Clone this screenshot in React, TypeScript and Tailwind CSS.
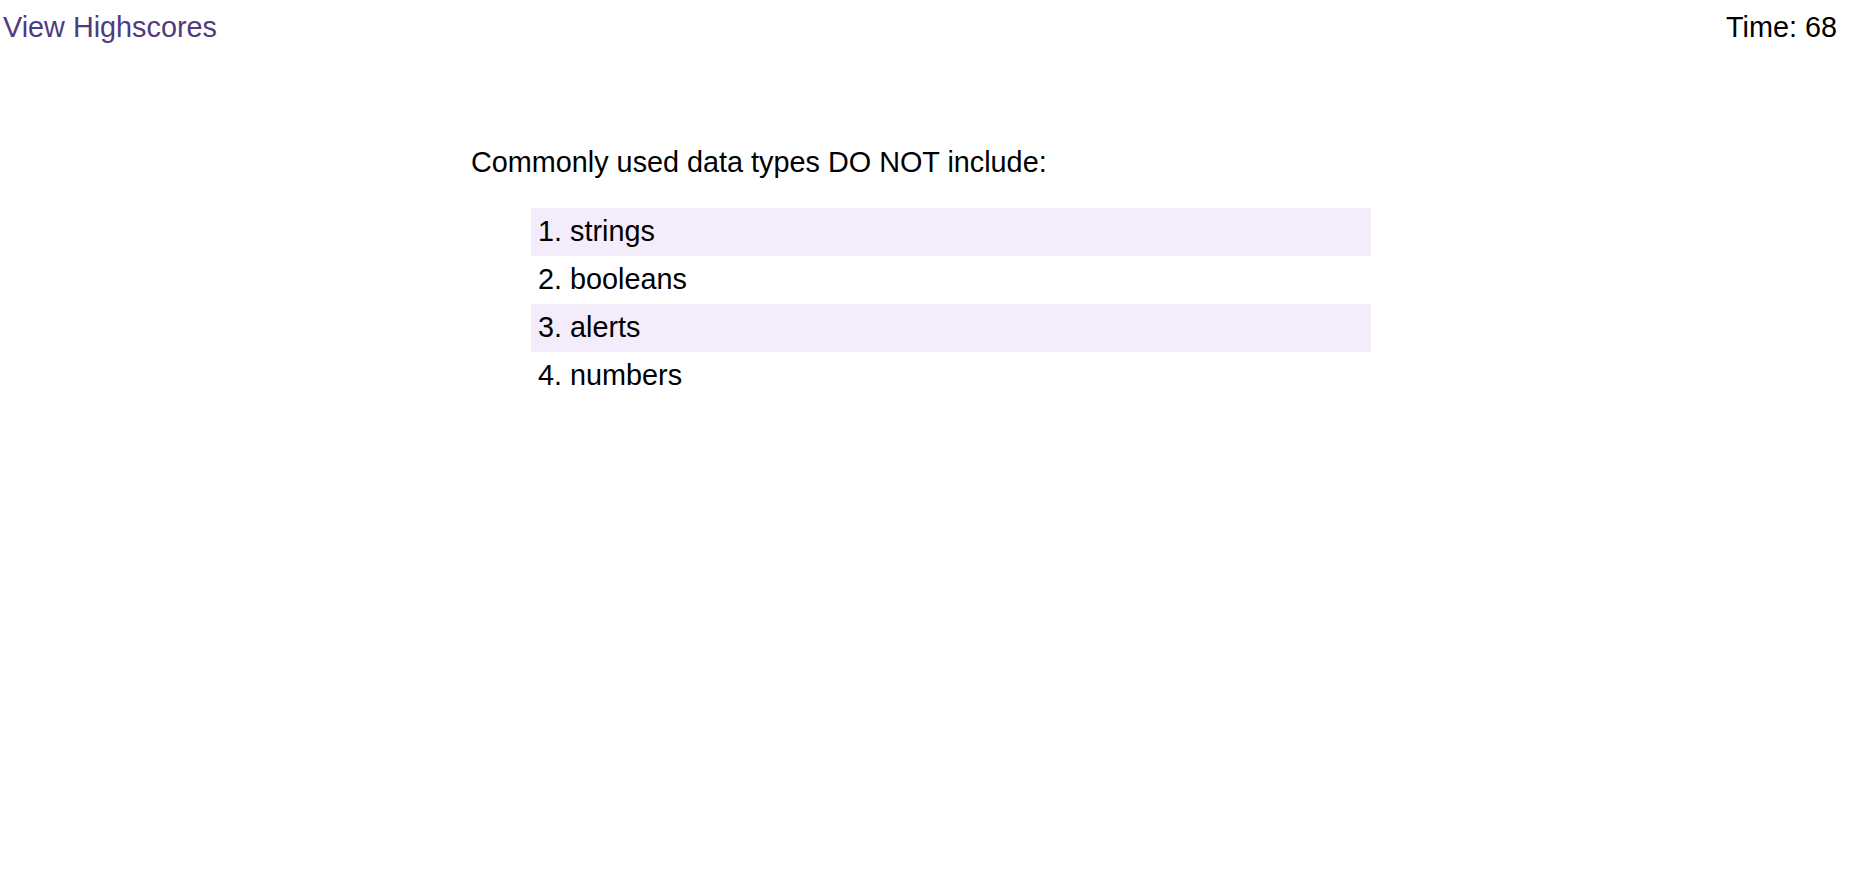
import React from 'react';

const choices = ['strings', 'booleans', 'alerts', 'numbers'];

const App: React.FC = () => {
  return (
    <div className="min-h-screen w-full bg-white text-black font-['Liberation_Sans',Arial,sans-serif] text-[28.8px]">
      {/* top bar */}
      <header className="flex justify-between items-start px-[3px] pt-[11px] leading-[33px]">
        <a className="text-[#4f3b7e] cursor-pointer">View Highscores</a>
        <div className="pr-[10px]">Time: 68</div>
      </header>

      <main className="w-[908px] mx-auto mt-[102px]">
        <h2 className="leading-[33px]">Commonly used data types DO NOT include:</h2>
        <ol className="mt-[29px] ml-[60px] w-[840px]">
          {choices.map((c, i) => (
            <li
              key={c}
              className={
                'h-[48px] flex items-center pl-[7px] pb-[1px] leading-[33px] ' +
                (i % 2 === 0 ? 'bg-[#f3edfb]' : 'bg-white')
              }
            >
              {i + 1}. {c}
            </li>
          ))}
        </ol>
      </main>
    </div>
  );
};

export default App;
